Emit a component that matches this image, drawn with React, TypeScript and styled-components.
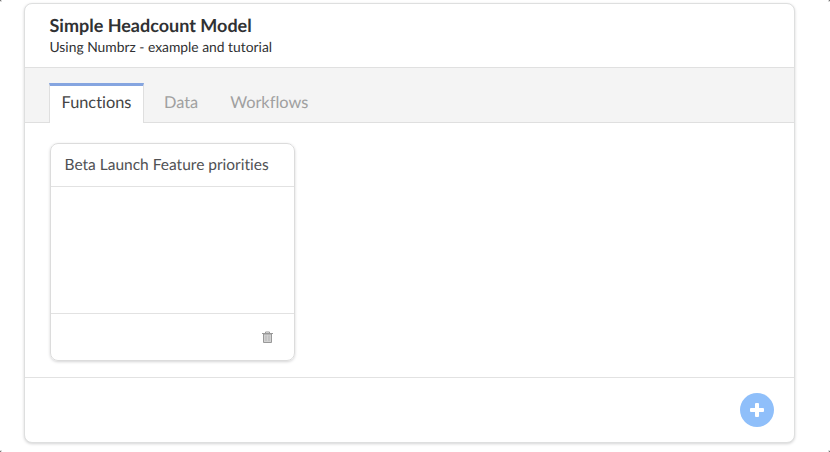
import React from "react";
import styled, { createGlobalStyle } from "styled-components";

const GlobalStyle = createGlobalStyle`
  * { box-sizing: border-box; }
  body {
    margin: 0;
    background: #fff;
    font-family: Lato, sans-serif;
    font-variant-ligatures: none;
    text-rendering: geometricPrecision;
    color: #303133;
    overflow: hidden;
  }
`;

const Window = styled.div`
  position: relative;
  width: 830px;
  height: 452px;
  padding: 3px 0 0 24px;
`;

const Corner = styled.i<{ $v: "top" | "bottom"; $h: "left" | "right" }>`
  position: absolute;
  ${p => p.$v}: 0;
  ${p => p.$h}: 0;
  width: 1px;
  height: 1px;
  background: #777;
  box-shadow: 0 0 0 1px #ddd;
`;

const Panel = styled.main`
  width: 771px;
  height: 440px;
  display: flex;
  flex-direction: column;
  background: #fff;
  border: 1px solid #dedfdf;
  border-radius: 8px;
  box-shadow: 0 1px 3px #d4d4d5;
  overflow: hidden;
`;

const Header = styled.header`
  height: 64px;
  padding: 10px 24.5px 0;
  border-bottom: 1px solid #e0e0e0;
`;

const Title = styled.h1`
  margin: 0;
  font-size: 18px;
  line-height: 23px;
  font-weight: 700;
`;

const Subtitle = styled.p`
  margin: 0;
  font-size: 13.85px;
  line-height: 20px;
`;

const TabBar = styled.nav`
  height: 55px;
  padding: 15px 24px 0;
  display: flex;
  background: #f4f4f4;
  border-bottom: 1px solid #dfdfdf;
`;

const Tab = styled.button<{ $active?: boolean }>`
  height: 40px;
  padding: ${p => (p.$active ? "0 11.5px" : "3px 0 0")};
  margin-right: ${p => (p.$active ? "19px" : "30px")};
  border: 1px solid ${p => (p.$active ? "#dfdfdf" : "transparent")};
  border-width: ${p => (p.$active ? "3px 1px 0" : "0 1px")};
  border-top-color: #85a5e0;
  background: ${p => (p.$active ? "#fff" : "transparent")};
  color: ${p => (p.$active ? "#444" : "#a0a0a0")};
  font: 16.35px/33px Lato, sans-serif;
  font-variant-ligatures: none;
  text-rendering: geometricPrecision;
  display: flex;
  align-items: flex-start;
`;

const Content = styled.section`
  flex: 1;
  padding: 20px 25px 0;
`;

const Card = styled.article`
  width: 245px;
  height: 218px;
  display: flex;
  flex-direction: column;
  border: 1px solid #dcdcdc;
  border-radius: 8px;
  box-shadow: 0 1px 3px #d4d4d5;
`;

const CardTitle = styled.h2`
  margin: 0;
  height: 43px;
  padding: 0 13.5px;
  border-bottom: 1px solid #e2e2e2;
  color: #505154;
  font-size: 15.5px;
  line-height: 43px;
  font-weight: 400;
`;

const CardBody = styled.div`
  flex: 1;
`;

const CardFooter = styled.footer`
  height: 47px;
  padding-right: 21.5px;
  border-top: 1px solid #e2e2e2;
  display: flex;
  align-items: center;
  justify-content: flex-end;
`;

const Footer = styled.footer`
  height: 65px;
  padding-right: 20px;
  border-top: 1px solid #e2e2e2;
  display: flex;
  align-items: center;
  justify-content: flex-end;
`;

const AddButton = styled.button`
  width: 34px;
  height: 34px;
  padding: 0;
  display: grid;
  place-items: center;
  border: 0;
  border-radius: 50%;
  background: #8fbffa;
`;

export default function App() {
  return (
    <>
      <GlobalStyle />
      <Window>
        <Panel>
          <Header>
            <Title>Simple Headcount Model</Title>
            <Subtitle>Using Numbrz - example and tutorial</Subtitle>
          </Header>
          <TabBar>
            <Tab $active>Functions</Tab>
            <Tab>Data</Tab>
            <Tab>Workflows</Tab>
          </TabBar>
          <Content>
            <Card>
              <CardTitle>Beta Launch Feature priorities</CardTitle>
              <CardBody />
              <CardFooter>
                <svg width="11" height="13" viewBox="0 0 11 13" fill="none">
                  <path d="M1.5 3h8v8.5h-8z" fill="#d2d2d2" stroke="#999" />
                  <path d="M0 2.5h11M3.5 2.5v-1.5h4v1.5" stroke="#999" />
                  <path d="M4 4.5v5.5M7 4.5v5.5" stroke="#b5b5b5" />
                </svg>
              </CardFooter>
            </Card>
          </Content>
          <Footer>
            <AddButton aria-label="Add">
              <svg width="16" height="16" viewBox="0 0 16 16" fill="#fff">
                <rect x="6" y="1" width="4" height="14" rx="1" />
                <rect x="1" y="6" width="14" height="4" rx="1" />
              </svg>
            </AddButton>
          </Footer>
        </Panel>
        <Corner $v="top" $h="left" />
        <Corner $v="top" $h="right" />
        <Corner $v="bottom" $h="left" />
        <Corner $v="bottom" $h="right" />
      </Window>
    </>
  );
}
